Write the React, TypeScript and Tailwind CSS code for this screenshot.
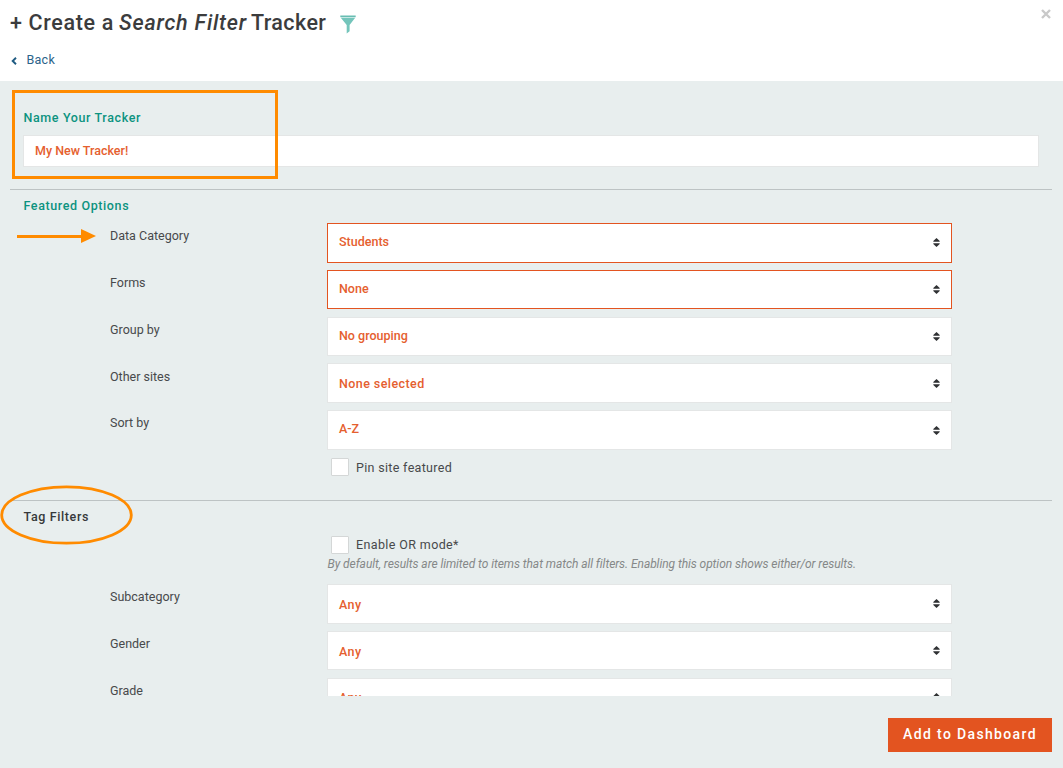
import React from "react";

function SortIcon({ className = "mt-[14px]" }: { className?: string }) {
  return (
    <svg className={`mr-[10px] h-[9px] w-[9px] shrink-0 ${className}`} viewBox="-0.5 0 9 9" fill="#2f3133">
      <path d="M4 0 7.2 3.1Q7.5 3.7 6.9 3.7H1.1Q.5 3.7.8 3.1Z" />
      <path d="M4 9 7.2 5.9Q7.5 5.3 6.9 5.3H1.1Q.5 5.3.8 5.9Z" />
    </svg>
  );
}

type RowProps = {
  label: string;
  value: string;
  row?: string;
  box?: string;
  labelClass?: string;
  valueClass?: string;
  iconClass?: string;
};

function Row({
  label,
  value,
  row = "h-[47px]",
  box = "h-10 border-[#e4e6e6]",
  labelClass = "pt-[4px]",
  valueClass = "pt-[9px] tracking-[0px]",
  iconClass,
}: RowProps) {
  return (
    <div className={`flex shrink-0 items-start pl-[110px] ${row}`}>
      <div className={`w-[217px] shrink-0 text-[12.5px] leading-[18px] tracking-[0px] text-[#47494b] ${labelClass}`}>{label}</div>
      <div className={`flex w-[625px] items-start justify-between border bg-white pl-[11px] ${box}`}>
        <span className={`text-[12.5px] font-medium leading-[18px] text-[#e5602f] ${valueClass}`}>{value}</span>
        <SortIcon className={iconClass} />
      </div>
    </div>
  );
}

function Check({ label, className, textClass = "" }: { label: string; className: string; textClass?: string }) {
  return (
    <label className={`flex items-start pl-[331px] ${className}`}>
      <span className="h-[18px] w-[18px] rounded-[1px] border border-[#d4d7d7] bg-white" />
      <span className={`ml-[7px] text-[12.5px] leading-[18px] text-[#47494b] ${textClass}`}>{label}</span>
    </label>
  );
}

export default function App() {
  return (
    <div className="relative flex h-[768px] w-[1063px] flex-col overflow-hidden bg-[#e8eeee] font-['Roboto',sans-serif]">
      <header className="flex h-[81px] shrink-0 flex-col bg-white">
        <div className="flex h-[46px] items-start justify-between">
          <div className="flex items-start pl-[10px] pt-[9px]">
            <h1 className="flex whitespace-pre text-[21.5px] font-medium leading-[28px] tracking-[0.65px] text-[#3b3c3d]">
              <span className="w-[109px]">+ Create a</span>
              <em className="w-[132px] tracking-[0.8px]">Search Filter</em>
              <span className="w-[76px] tracking-[0.4px]">Tracker</span>
            </h1>
            <svg className="ml-[13px] mt-[6px] h-[19px] w-[16px]" viewBox="0 0 16 19">
              <path d="M.3.5H15.7V2.2H.3Z" fill="#68bdb2" />
              <path d="M.8 2.7H15.2L9.6 10V16.2L6.7 18.5V10Z" fill="#74c5bb" />
            </svg>
          </div>
          <svg className="mr-[12px] mt-[9px] h-[10px] w-[10px]" viewBox="0 0 10 10" stroke="#c9c9c9" strokeWidth="2.4">
            <path d="M1 1 9 9M9 1 1 9" />
          </svg>
        </div>
        <a className="flex items-center pl-[11px] pt-[5px] text-[12.5px] leading-[18px] tracking-[0.25px] text-[#2b648a]">
          <svg className="mr-[9.5px] mt-[2px] h-[8px] w-[6px]" viewBox="0 0 6 8" fill="none" stroke="#1f5b82" strokeWidth="1.9">
            <path d="M5 .8 1.7 4 5 7.2" />
          </svg>
          <span>Back</span>
        </a>
      </header>

      <main className="flex h-[615px] shrink-0 flex-col overflow-hidden">
        <section className="ml-[10px] flex h-[109px] w-[1042px] shrink-0 flex-col border-b border-[#bdc3c4] pl-[13px] pt-[28px]">
          <h2 className="pl-[0.5px] text-[12.5px] font-medium leading-[18px] tracking-[0.62px] text-[#0c9380]">Name Your Tracker</h2>
          <div className="mt-[8px] h-8 w-[1016px] border border-[#e4e6e6] bg-white pl-[11px] pt-[6px] text-[12.5px] font-medium leading-[18px] text-[#e5602f]">
            My New Tracker!
          </div>
        </section>

        <section className="flex h-[310px] shrink-0 flex-col">
          <h2 className="h-[33px] pl-[23.5px] pt-[7px] text-[12.5px] font-medium leading-[18px] tracking-[0.61px] text-[#0c9380]">Featured Options</h2>
          <Row label="Data Category" value="Students" box="h-10 border-[#e35420]" />
          <Row label="Forms" value="None" box="h-[39px] border-[#e35420]" />
          <Row label="Group by" value="No grouping" row="h-[46px]" box="h-[39px] border-[#e4e6e6]" />
          <Row label="Other sites" value="None selected" labelClass="pt-[5px]" valueClass="pt-[11px] tracking-[0.42px]" iconClass="mt-[15px]" />
          <Row label="Sort by" value="A-Z" iconClass="mt-[15px]" />
          <Check label="Pin site featured" className="mt-[1px] tracking-[0.32px]" textClass="pt-[1px]" />
        </section>
        <div className="ml-[10px] h-px w-[1042px] shrink-0 bg-[#bdc3c4]" />

        <section className="flex shrink-0 flex-col">
          <h2 className="h-[35px] pl-[23.5px] pt-[7px] text-[12.5px] font-medium leading-[18px] tracking-[0.62px] text-[#36393b]">Tag Filters</h2>
          <Check label="Enable OR mode*" className="tracking-[0.38px]" />
          <p className="h-[30px] pl-[327.5px] pt-[1px] text-[12px] italic leading-[18px] tracking-[-0.063px] text-[#858888]">
            By default, results are limited to items that match all filters. Enabling this option shows either/or results.
          </p>
          <Row label="Subcategory" value="Any" valueClass="pt-[11px] tracking-[0.4px]" />
          <Row label="Gender" value="Any" box="h-[39px] border-[#e4e6e6]" valueClass="pt-[11px] tracking-[0.4px]" />
          <Row label="Grade" value="Any" valueClass="pt-[10px] tracking-[0.4px]" />
        </section>
      </main>

      <footer className="flex h-[72px] shrink-0 items-start justify-end pr-[11px] pt-[22px]">
        <button className="h-[34px] w-[164px] whitespace-nowrap bg-[#e35420] pb-[2px] text-[14px] font-medium tracking-[1.35px] text-white">Add to Dashboard</button>
      </footer>

      <svg className="pointer-events-none absolute left-0 top-0 h-[768px] w-[300px]" viewBox="0 0 300 768" fill="none" stroke="#ff8b00">
        <rect x="13.5" y="91.5" width="263" height="86" strokeWidth="3" />
        <path d="M17 236.5H82" strokeWidth="3" />
        <path d="M81 229 96 236 81 243Z" fill="#ff8b00" stroke="none" />
        <ellipse cx="66.5" cy="515" rx="64.8" ry="28.2" strokeWidth="2.8" />
      </svg>
    </div>
  );
}
